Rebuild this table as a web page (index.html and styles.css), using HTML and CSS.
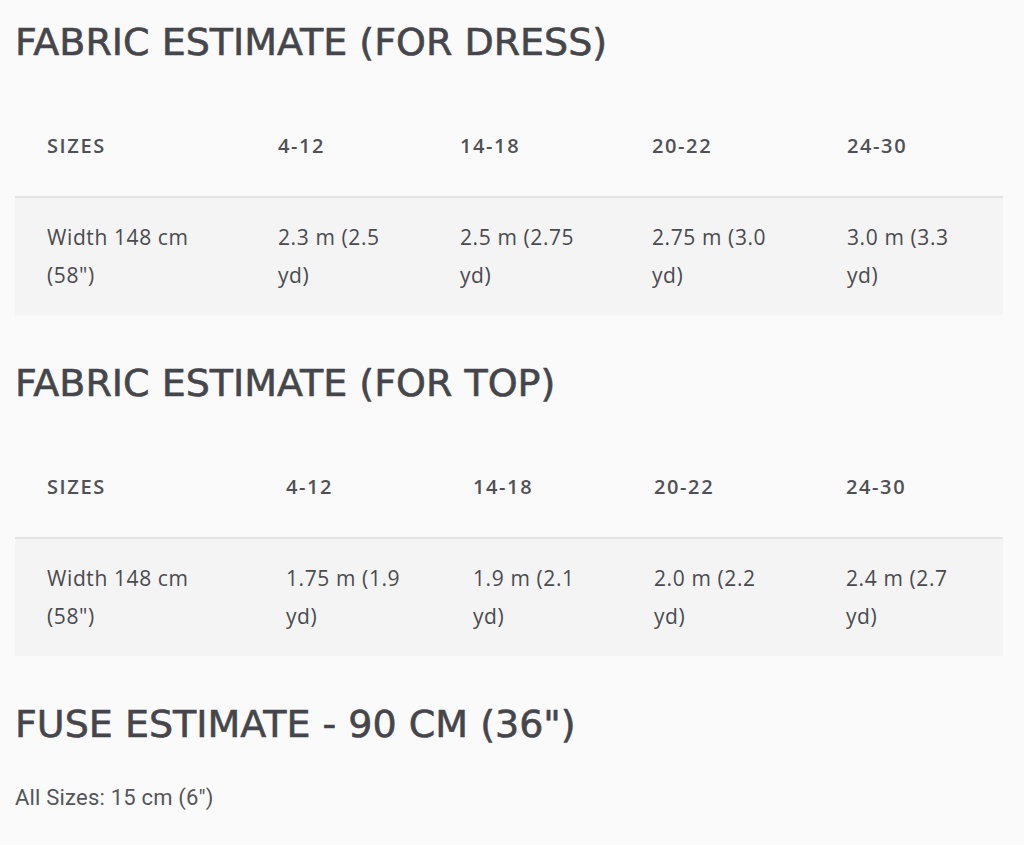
FILE: index.html
```html
<!DOCTYPE html>
<html>
<head>
<meta charset="utf-8">
<link rel="stylesheet" href="styles.css">
</head>
<body>
<main class="page">
  <h2 class="title">FABRIC ESTIMATE (FOR DRESS)</h2>
  <table class="est est-dress">
    <colgroup><col class="c1"><col class="c2"><col class="c3"><col class="c4"><col class="c5"></colgroup>
    <thead>
      <tr><th>SIZES</th><th>4-12</th><th>14-18</th><th>20-22</th><th>24-30</th></tr>
    </thead>
    <tbody>
      <tr><td>Width 148 cm (58")</td><td>2.3 m (2.5 yd)</td><td>2.5 m (2.75 yd)</td><td>2.75 m (3.0 yd)</td><td>3.0 m (3.3 yd)</td></tr>
    </tbody>
  </table>
  <h2 class="title">FABRIC ESTIMATE (FOR TOP)</h2>
  <table class="est est-top">
    <colgroup><col class="c1"><col class="c2"><col class="c3"><col class="c4"><col class="c5"></colgroup>
    <thead>
      <tr><th>SIZES</th><th>4-12</th><th>14-18</th><th>20-22</th><th>24-30</th></tr>
    </thead>
    <tbody>
      <tr><td>Width 148 cm (58")</td><td>1.75 m (1.9 yd)</td><td>1.9 m (2.1 yd)</td><td>2.0 m (2.2 yd)</td><td>2.4 m (2.7 yd)</td></tr>
    </tbody>
  </table>
  <h2 class="title title-last">FUSE ESTIMATE - 90 CM (36")</h2>
  <p class="note">All Sizes: 15 cm (6")</p>
</main>
</body>
</html>
```
FILE: styles.css
```css
html, body {
  margin: 0;
  padding: 0;
  background: #fafafa;
}
body {
  color: #4a4b50;
  font-family: "Open Sans", sans-serif;
}
.page {
  padding: 18px 21px 0 15px;
}
.title {
  font-family: "DejaVu Sans", sans-serif;
  font-weight: 400;
  font-size: 38px;
  line-height: 48px;
  margin: 0 0 42px 0;
  color: #45464b;
  -webkit-text-stroke: 0.6px #45464b;
}
.title-last {
  margin-bottom: 37px;
}
.est {
  width: 100%;
  table-layout: fixed;
  border-collapse: collapse;
  margin-bottom: 44px;
  font-size: 21px;
  line-height: 38px;
}
.est-dress .c1 { width: 231px; }
.est-dress .c2 { width: 182px; }
.est-dress .c3 { width: 192px; }
.est-dress .c4 { width: 195px; }
.est-dress .c5 { width: 188px; }
.est-top .c1 { width: 239px; }
.est-top .c2 { width: 187px; }
.est-top .c3 { width: 181px; }
.est-top .c4 { width: 192px; }
.est-top .c5 { width: 189px; }
.est th {
  text-align: left;
  font-weight: 600;
  font-size: 20px;
  letter-spacing: 1.6px;
  padding: 19px 30px 31px 32px;
  border-bottom: 2px solid #e4e4e4;
  vertical-align: top;
  color: #505156;
}
.est td {
  text-align: left;
  background: #f4f4f4;
  padding: 20px 26px 21px 32px;
  vertical-align: top;
  letter-spacing: 0.6px;
}
.note {
  font-family: "Roboto", sans-serif;
  font-size: 22px;
  letter-spacing: 0.2px;
  margin: 0;
  color: #55565b;
}
```
